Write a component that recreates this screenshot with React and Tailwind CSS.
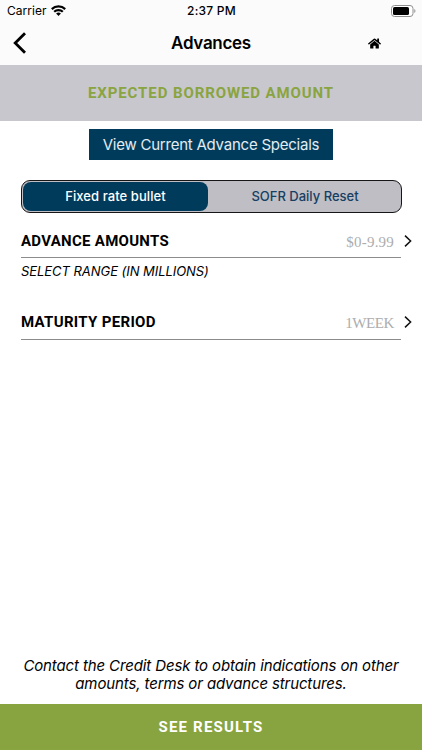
import { useState } from "react";
import { FaHome } from "react-icons/fa";
import clsx from "clsx";

const headingStyle = "font-['Roboto',sans-serif] font-bold whitespace-nowrap";
const tabs = ["Fixed rate bullet", "SOFR Daily Reset"];

function StatusBar() {
  return (
    <div className="grid grid-cols-3 items-center h-[22px] pl-[7px] pr-[6px] text-[12px] leading-[22px]">
      <div className="flex items-center gap-[5px]">
        <span className="tracking-[0.02px]">Carrier</span>
        <svg className="-mt-px" width="15" height="11" viewBox="0 0 15 11" fill="none" stroke="#000" strokeWidth="2.2">
          <path d="M0.8 4.1a9.6 9.6 0 0 1 13.4 0" />
          <path d="M3.2 6.8a6.1 6.1 0 0 1 8.6 0" />
          <path d="M7.5 11 5.1 8.6a3.4 3.4 0 0 1 4.8 0z" fill="#000" stroke="none" />
        </svg>
      </div>
      <span className="text-center font-medium tracking-[0.25px]">2:37 PM</span>
      <svg className="justify-self-end -mt-px" width="25" height="12" viewBox="0 0 25 12">
        <rect x="0.5" y="0.5" width="21.5" height="11" rx="3" fill="#fff" stroke="#8e8e8e" />
        <rect x="2" y="2" width="16" height="8" rx="1.6" fill="#000" />
        <path d="M23.3 4v4c1.5-.6 1.5-3.4 0-4z" fill="#8e8e8e" />
      </svg>
    </div>
  );
}

function Row({ label, labelClass, value, valueClass, className }) {
  return (
    <button className={clsx("flex justify-between w-[380px] border-b border-[#8c8c8c]", className)}>
      <span className={clsx(headingStyle, "text-[15px] leading-5", labelClass)}>{label}</span>
      <span className="flex items-center h-5 -mr-[11px]">
        <span className={clsx("font-['Liberation_Serif',serif] text-[#adadad] leading-5 mr-[10px] pt-0.5 whitespace-nowrap", valueClass)}>
          {value}
        </span>
        <svg width="8" height="12" viewBox="0 0 8 12" fill="none" stroke="#111" strokeWidth="1.5">
          <path d="M1 0.6 6.6 6 1 11.4" />
        </svg>
      </span>
    </button>
  );
}

function App() {
  const [activeTab, setActiveTab] = useState(0);

  return (
    <div className="flex flex-col h-[750px] w-[422px] bg-white text-black font-['Inter',sans-serif] overflow-hidden">
      <header className="h-[65px] bg-[#fbfbfb] shrink-0">
        <StatusBar />
        <div className="grid grid-cols-3 items-center h-[42px]">
          <button className="pl-[13px]">
            <svg width="14" height="22" viewBox="0 0 14 22" fill="none" stroke="#000" strokeWidth="2.8">
              <path d="M12 1.2 2.2 11 12 20.8" />
            </svg>
          </button>
          <h1 className="text-center text-[17px] leading-[22px] font-semibold tracking-[-0.3px]">Advances</h1>
          <button className="justify-self-end mr-[41px]">
            <FaHome className="size-[13px]" />
          </button>
        </div>
      </header>

      <div className="flex items-center justify-center h-[56px] bg-[#c8c7cd] shrink-0">
        <h2 className={clsx(headingStyle, "text-[15px] tracking-[0.9px] text-[#89a440]")}>EXPECTED BORROWED AMOUNT</h2>
      </div>

      <button className="self-center mt-2 w-[244px] h-[31px] shrink-0 bg-[#013b5c] text-[#e3ecf2] text-[15px] leading-[31px] tracking-[-0.23px] whitespace-nowrap">
        View Current Advance Specials
      </button>

      <div className="flex ml-[21px] mt-5 w-[381px] h-[33px] shrink-0 rounded-[9px] border border-[#161616] bg-[#bfbec4] p-px">
        {tabs.map((tab, i) => (
          <button
            key={tab}
            onClick={() => setActiveTab(i)}
            className={clsx(
              "text-[13px] font-medium whitespace-nowrap pt-px",
              i === 0 ? "w-[185px] tracking-[0.08px]" : "flex-1 pl-0.5",
              activeTab === i ? "rounded-[8px] bg-[#013b5c] text-white" : "text-[#163f63]"
            )}
          >
            {tab}
          </button>
        ))}
      </div>

      <Row
        className="ml-[21px] mt-[18px] h-[27px]"
        label="ADVANCE AMOUNTS"
        labelClass="tracking-[0.28px]"
        value="$0-9.99"
        valueClass="text-[15px] tracking-[0.2px]"
      />
      <p className="ml-[21px] mt-[4px] text-[13px] leading-[18px] tracking-[-0.05px] italic whitespace-nowrap">
        SELECT RANGE (IN MILLIONS)
      </p>

      <Row
        className="ml-[21px] mt-[32px] h-[28px]"
        label="MATURITY PERIOD"
        labelClass="tracking-[0.32px]"
        value="1WEEK"
        valueClass="text-[15px] tracking-[-0.4px]"
      />

      <p className="mt-auto mb-[11px] text-center text-[15px] leading-[18px] tracking-[-0.12px] italic whitespace-nowrap">
        Contact the Credit Desk to obtain indications on other
        <br />
        amounts, terms or advance structures.
      </p>
      <button className={clsx(headingStyle, "h-[46px] shrink-0 bg-[#88a440] text-white text-[15px] tracking-[1.2px]")}>
        SEE RESULTS
      </button>
    </div>
  );
}

export default App;
